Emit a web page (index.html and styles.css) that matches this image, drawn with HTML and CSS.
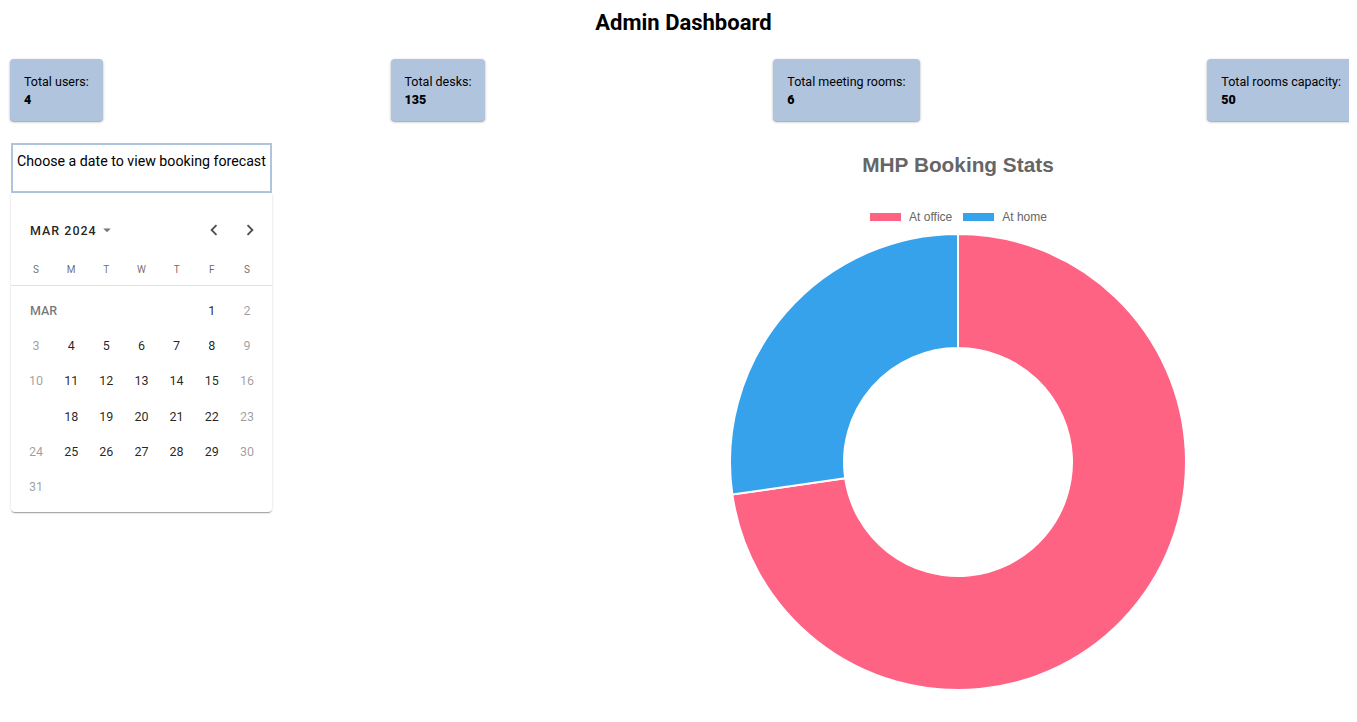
FILE: index.html
```html
<!DOCTYPE html>
<html lang="en">
<head>
<meta charset="utf-8">
<title>Admin Dashboard</title>
<link rel="stylesheet" href="styles.css">
</head>
<body>
<h1 class="page-title">Admin Dashboard</h1>

<div class="stats">
  <div class="stat-card"><div class="stat-label">Total users:</div><div class="stat-value">4</div></div>
  <div class="stat-card"><div class="stat-label">Total desks:</div><div class="stat-value">135</div></div>
  <div class="stat-card"><div class="stat-label">Total meeting rooms:</div><div class="stat-value">6</div></div>
  <div class="stat-card last"><div class="stat-label">Total rooms capacity:</div><div class="stat-value">50</div></div>
</div>

<div class="main">
  <div class="left-col">
    <div class="prompt">Choose a date to view booking forecast</div>
    <div class="calendar">
      <div class="cal-header">
        <div class="cal-month">MAR 2024
          <svg class="drop" viewBox="0 0 24 24" width="18" height="18"><path d="M7 10l5 5 5-5z"/></svg>
        </div>
        <div class="cal-nav">
          <span class="nav-btn"><svg viewBox="0 0 24 24" width="22" height="22"><path d="M15.41 16.59 10.83 12l4.58-4.59L14 6l-6 6 6 6 1.41-1.41z"/></svg></span>
          <span class="nav-btn"><svg viewBox="0 0 24 24" width="22" height="22"><path d="M8.59 16.59 13.17 12 8.59 7.41 10 6l6 6-6 6-1.41-1.41z"/></svg></span>
        </div>
      </div>
      <div class="weekdays">
        <span>S</span><span>M</span><span>T</span><span>W</span><span>T</span><span>F</span><span>S</span>
      </div>
      <div class="days">
        <span class="month-label">MAR</span><span class="d">1</span><span class="d we">2</span>
        <span class="d we">3</span><span class="d">4</span><span class="d">5</span><span class="d">6</span><span class="d">7</span><span class="d">8</span><span class="d we">9</span>
        <span class="d we">10</span><span class="d">11</span><span class="d">12</span><span class="d">13</span><span class="d">14</span><span class="d">15</span><span class="d we">16</span>
        <span class="d"></span><span class="d">18</span><span class="d">19</span><span class="d">20</span><span class="d">21</span><span class="d">22</span><span class="d we">23</span>
        <span class="d we">24</span><span class="d">25</span><span class="d">26</span><span class="d">27</span><span class="d">28</span><span class="d">29</span><span class="d we">30</span>
        <span class="d we">31</span>
      </div>
    </div>
  </div>

  <div class="chart">
    <div class="chart-title">MHP Booking Stats</div>
    <div class="legend">
      <span class="legend-box office"></span><span class="legend-text">At office</span>
      <span class="legend-box home"></span><span class="legend-text">At home</span>
    </div>
    <svg class="donut" viewBox="0 0 460 460" width="460" height="460">
      <path class="seg-office" d="M230 2 A228 228 0 1 1 4.32 262.45 L117.16 246.22 A114 114 0 1 0 230 116 Z"/>
      <path class="seg-home" d="M4.32 262.45 A228 228 0 0 1 230 2 L230 116 A114 114 0 0 0 117.16 246.22 Z"/>
    </svg>
  </div>
</div>
</body>
</html>
```
FILE: styles.css
```css
body {
  margin: 8px;
  font-family: Roboto, "Liberation Sans", Arial, sans-serif;
  color: #000;
  background: #fff;
}

.page-title {
  margin: 0;
  padding-left: 10px;
  font-size: 22px;
  line-height: 30px;
  font-weight: 700;
  text-align: center;
}

.stats {
  display: flex;
  justify-content: space-between;
  align-items: flex-start;
  margin: 21px -4px 0 0;
  padding: 0 0 0 2px;
}

.stat-card {
  background: #b0c4de;
  border-radius: 4px;
  padding: 14px 14px 12px;
  box-shadow: 0 1px 3px rgba(0,0,0,0.25), 0 1px 1px rgba(0,0,0,0.18);
  font-size: 12.5px;
  line-height: 18px;
}

.stat-card.last {
  padding-right: 12px;
}

.stat-value {
  font-weight: 900;
}

.main {
  display: flex;
  align-items: flex-start;
  margin-top: 22px;
}

.left-col {
  width: 261px;
  margin-left: 3px;
}

.prompt {
  box-sizing: border-box;
  height: 50px;
  border: 2px solid #b0c4de;
  padding: 6px 4px;
  font-size: 14.2px;
  line-height: 20px;
  white-space: nowrap;
}

.calendar {
  background: #fff;
  border-radius: 0 0 4px 4px;
  box-shadow: 0 2px 1px -1px rgba(0,0,0,0.2), 0 1px 1px rgba(0,0,0,0.14), 0 1px 3px rgba(0,0,0,0.12);
  padding: 22px 0 8px;
}

.cal-header {
  display: flex;
  align-items: center;
  justify-content: space-between;
  height: 30px;
  padding: 0 4px 0 19px;
}

.cal-month {
  display: flex;
  align-items: center;
  font-size: 12.5px;
  font-weight: 500;
  letter-spacing: 1px;
  color: rgba(0,0,0,0.87);
}

.drop {
  fill: rgba(0,0,0,0.54);
  margin-left: 1px;
}

.cal-nav {
  display: flex;
}

.nav-btn {
  width: 36px;
  height: 30px;
  display: flex;
  align-items: center;
  justify-content: center;
}

.nav-btn svg {
  fill: rgba(0,0,0,0.7);
}

.weekdays {
  display: grid;
  grid-template-columns: repeat(7, 1fr);
  padding: 0 7.5px;
  margin-top: 8px;
  height: 32px;
  align-items: center;
  border-bottom: 1px solid #e0e0e0;
  font-size: 10px;
  color: rgba(0,0,0,0.6);
  text-align: center;
}

.days {
  display: grid;
  grid-template-columns: repeat(7, 1fr);
  grid-auto-rows: 35.2px;
  padding: 7px 7.5px 0;
  font-size: 12.5px;
  color: rgba(0,0,0,0.87);
  text-align: center;
}

.days span {
  display: flex;
  align-items: center;
  justify-content: center;
}

.days .month-label {
  grid-column: 1 / span 5;
  justify-content: flex-start;
  padding-left: 11.5px;
  font-weight: 500;
  font-size: 12.5px;
  color: rgba(0,0,0,0.55);
}

.days .we {
  color: rgba(0,0,0,0.4);
}

.chart {
  width: 782px;
  margin-left: auto;
  display: flex;
  flex-direction: column;
  align-items: center;
  padding-top: 10px;
  font-family: "Liberation Sans", Arial, sans-serif;
  color: #666;
}

.chart-title {
  font-size: 20.8px;
  font-weight: 700;
  line-height: 24px;
}

.legend {
  display: flex;
  align-items: center;
  margin-top: 35px;
  height: 10px;
  font-size: 12px;
}

.legend-box {
  width: 33px;
  height: 10px;
  box-sizing: border-box;
  border: 1px solid #fff;
}

.legend-box.office { background: #ff6384; }
.legend-box.home { background: #36a2eb; margin-left: 10px; }

.legend-text {
  margin-left: 7px;
  line-height: 10px;
}

.donut {
  display: block;
  margin-top: 10px;
}

.seg-office { fill: #ff6384; stroke: #fff; stroke-width: 2; }
.seg-home { fill: #36a2eb; stroke: #fff; stroke-width: 2; }
```
